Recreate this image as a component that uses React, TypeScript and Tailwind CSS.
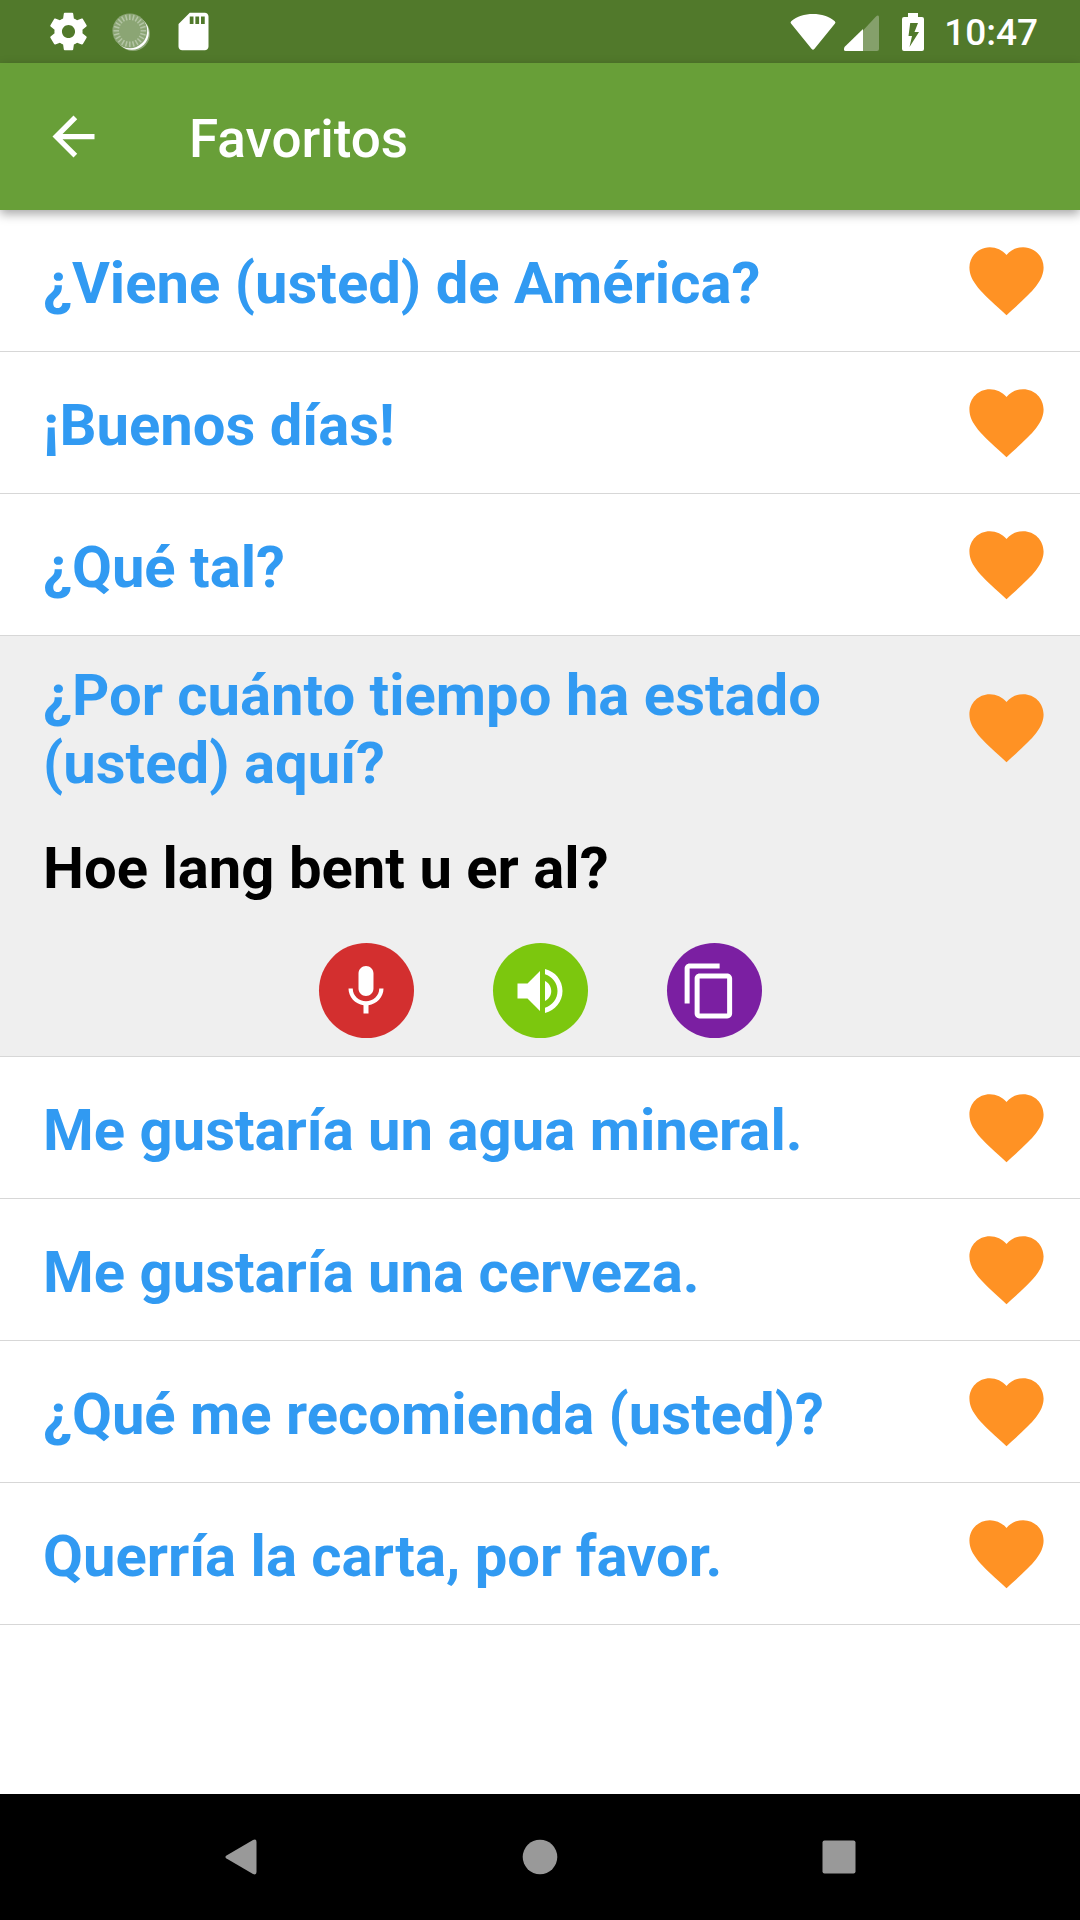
import { useState } from "react";
import type { ReactNode } from "react";
import clsx from "clsx";

type Phrase = { text: string; translation: string };

const phrases: Phrase[] = [
  { text: "¿Viene (usted) de América?", translation: "Komt u uit Amerika?" },
  { text: "¡Buenos días!", translation: "Dag!" },
  { text: "¿Qué tal?", translation: "Hoe gaat het?" },
  {
    text: "¿Por cuánto tiempo ha estado (usted) aquí?",
    translation: "Hoe lang bent u er al?",
  },
  { text: "Me gustaría un agua mineral.", translation: "Ik wil graag een mineraalwater." },
  { text: "Me gustaría una cerveza.", translation: "Ik wil graag een biertje." },
  { text: "¿Qué me recomienda (usted)?", translation: "Wat kunt u mij aanbevelen?" },
  { text: "Querría la carta, por favor.", translation: "De menukaart, alstublieft." },
];

const icons = {
  settings:
    "M19.43 12.98c.04-.32.07-.64.07-.98s-.03-.66-.07-.98l2.11-1.65c.19-.15.24-.42.12-.64l-2-3.46c-.12-.22-.39-.3-.61-.22l-2.49 1c-.52-.4-1.08-.73-1.69-.98l-.38-2.65C14.46 2.18 14.25 2 14 2h-4c-.25 0-.46.18-.49.42l-.38 2.65c-.61.25-1.17.59-1.69.98l-2.49-1c-.23-.09-.49 0-.61.22l-2 3.46c-.13.22-.07.49.12.64l2.11 1.65c-.04.32-.07.65-.07.98s.03.66.07.98l-2.11 1.65c-.19.15-.24.42-.12.64l2 3.46c.12.22.39.3.61.22l2.49-1c.52.4 1.08.73 1.69.98l.38 2.65c.03.24.24.42.49.42h4c.25 0 .46-.18.49-.42l.38-2.65c.61-.25 1.17-.59 1.69-.98l2.49 1c.23.09.49 0 .61-.22l2-3.46c.12-.22.07-.49-.12-.64l-2.11-1.65zM12 15.5c-1.93 0-3.5-1.57-3.5-3.5s1.57-3.5 3.5-3.5 3.5 1.57 3.5 3.5-1.57 3.5-3.5 3.5z",
  sdCard:
    "M18 2h-8L4.02 8 4 20c0 1.1.9 2 2 2h12c1.1 0 2-.9 2-2V4c0-1.1-.9-2-2-2zm-6 6h-2V4h2v4zm3 0h-2V4h2v4zm3 0h-2V4h2v4z",
  back: "M20 11H7.83l5.59-5.59L12 4l-8 8 8 8 1.41-1.41L7.83 13H20v-2z",
  heart:
    "M12 21.35l-1.45-1.32C5.4 15.36 2 12.28 2 8.5 2 5.42 4.42 3 7.5 3c1.74 0 3.41.81 4.5 2.09C13.09 3.81 14.76 3 16.5 3 19.58 3 22 5.42 22 8.5c0 3.78-3.4 6.86-8.55 11.54L12 21.35z",
  mic: "M12 14c1.66 0 2.99-1.34 2.99-3L15 5c0-1.66-1.34-3-3-3S9 3.34 9 5v6c0 1.66 1.34 3 3 3zm5.3-3c0 3-2.54 5.1-5.3 5.1S6.7 14 6.7 11H5c0 3.41 2.72 6.23 6 6.72V21h2v-3.28c3.28-.48 6-3.3 6-6.72h-1.7z",
  volume:
    "M3 9v6h4l5 5V4L7 9H3zm13.5 3c0-1.77-1.02-3.29-2.5-4.03v8.05c1.48-.73 2.5-2.25 2.5-4.02zM14 3.23v2.06c2.89.86 5 3.54 5 6.71s-2.11 5.85-5 6.71v2.06c4.01-.91 7-4.49 7-8.77s-2.99-7.86-7-8.77z",
  copy: "M16 1H4c-1.1 0-2 .9-2 2v14h2V3h12V1zm3 4H8c-1.1 0-2 .9-2 2v14c0 1.1.9 2 2 2h11c1.1 0 2-.9 2-2V7c0-1.1-.9-2-2-2zm0 16H8V7h11v14z",
};

function Icon({
  d,
  className,
  viewBox = "0 0 24 24",
}: {
  d: string;
  className: string;
  viewBox?: string;
}) {
  return (
    <svg viewBox={viewBox} className={className} fill="currentColor" aria-hidden="true">
      <path d={d} />
    </svg>
  );
}

function SyncBall() {
  const ticks = Array.from({ length: 24 }, (_, i) => i * 15);
  return (
    <svg viewBox="0 0 38 38" className="size-[38px]" aria-hidden="true">
      <circle cx="21" cy="21" r="17" fill="#8ba574" />
      <circle cx="19.8" cy="19.8" r="17" fill="#fff" />
      <circle cx="17.8" cy="17.8" r="17.4" fill="#8ba574" />
      {ticks.map((angle) => (
        <path
          key={angle}
          d="M17.8 1.5v5.5"
          stroke="#b4c5a5"
          strokeWidth="1.5"
          transform={`rotate(${angle} 17.8 17.8)`}
        />
      ))}
    </svg>
  );
}

function StatusBar() {
  return (
    <div className="flex h-[63px] items-center justify-between bg-[#51792b] pr-[42px] pl-[46px] text-white">
      <div className="flex items-center gap-[21px]">
        <Icon d={icons.settings} className="size-[45px]" />
        <SyncBall />
        <Icon d={icons.sdCard} className="size-[45px]" />
      </div>
      <div className="flex items-center">
        <svg viewBox="0 0 46 38" className="mr-[7px] h-[38px] w-[46px]" aria-hidden="true">
          <path
            d="M1.2 8.2C7 3.5 14.5 1 23 1s16 2.5 21.8 7.2q1.2 1.1.2 2.4L24.3 36q-1.3 1.500-2.6 0L1 10.6q-1-1.300.2-2.400z"
            fill="#fff"
          />
        </svg>
        <svg viewBox="0 0 36 38" className="mr-[23px] h-[38px] w-[36px]" aria-hidden="true">
          <path d="M20 17.5 32.5 4Q36 1 36 4.500V36q0 2-2 2H20z" fill="#85a06b" />
          <path d="M20 16v22H2.500Q0 38 1.500 34z" fill="#fff" />
        </svg>
        <svg viewBox="0 0 22 38" className="mr-[20px] h-[38px] w-[22px]" aria-hidden="true">
          <path
            fillRule="evenodd"
            d="M6 0h10v4h4q2 0 2 2v30q0 2-2 2H2q-2 0-2-2V6q0-2 2-2h4zM8.200 10 6.500 23H10L7.500 34 17 19h-4.500l3.500-9z"
            fill="#fff"
          />
        </svg>
        <time className="pt-[2px] text-[37px] leading-[44px] font-medium">10:47</time>
      </div>
    </div>
  );
}

function AppBar() {
  return (
    <header className="relative flex h-[147px] items-center bg-[#689f38] pl-[42px] text-white shadow-[0_4px_10px_rgba(0,0,0,0.35)]">
      <button type="button" aria-label="Atrás">
        <Icon d={icons.back} className="size-[63px]" />
      </button>
      <h1 className="ml-[84px] pt-[4px] text-[53px] leading-[62px] font-medium">Favoritos</h1>
    </header>
  );
}

function RoundButton({
  label,
  className,
  onClick,
  children,
}: {
  label: string;
  className: string;
  onClick?: () => void;
  children: ReactNode;
}) {
  return (
    <button
      type="button"
      aria-label={label}
      onClick={onClick}
      className={clsx(
        "flex size-[95px] items-center justify-center rounded-full text-white",
        className,
      )}
    >
      {children}
    </button>
  );
}

function PhraseRow({
  phrase,
  open,
  onToggle,
}: {
  phrase: Phrase;
  open: boolean;
  onToggle: () => void;
}) {
  const [favorite, setFavorite] = useState(true);

  const copy = async () => {
    try {
      await navigator.clipboard.writeText(phrase.translation);
    } catch {
      alert("No se pudo copiar.");
    }
  };

  return (
    <li className={clsx("border-b border-[#d7d7d7]", open && "bg-[#efefef]")}>
      <div className="flex min-h-[141px] items-center py-[21px] pr-[29px] pl-[43px]">
        <button
          type="button"
          aria-expanded={open}
          onClick={onToggle}
          className="flex-1 pt-[4px] pr-[80px] text-left text-[58px] leading-[68px] font-bold text-[#319af2]"
        >
          {phrase.text}
        </button>
        <button
          type="button"
          aria-label="Favorito"
          aria-pressed={favorite}
          onClick={() => setFavorite(!favorite)}
          className={favorite ? "text-[#ff9224]" : "text-zinc-300"}
        >
          <Icon d={icons.heart} className="size-[89px]" />
        </button>
      </div>
      {open && (
        <div className="pb-[18px]">
          <p className="px-[43px] pt-[16px] text-[58px] leading-[68px] font-bold text-black">
            {phrase.translation}
          </p>
          <div className="mt-[41px] flex justify-center gap-[79px]">
            <RoundButton label="Grabar" className="bg-[#d32f2f]">
              <Icon d={icons.mic} className="size-[60px]" />
            </RoundButton>
            <RoundButton label="Escuchar" className="bg-[#7cc70e]">
              <Icon d={icons.volume} className="size-[60px]" />
            </RoundButton>
            <RoundButton label="Copiar" className="bg-[#7b1fa2]" onClick={() => void copy()}>
              <Icon d={icons.copy} viewBox="1.75 0 24 24" className="size-[60px]" />
            </RoundButton>
          </div>
        </div>
      )}
    </li>
  );
}

function NavBar() {
  return (
    <nav className="flex h-[126px] items-center justify-center gap-[263px] bg-black text-[#999]">
      <button type="button" aria-label="Atrás">
        <svg viewBox="0 0 36 36" className="size-[36px]" fill="currentColor" aria-hidden="true">
          <path d="M30 1Q33.500-.5 33.500 3v30q0 3.500-3.500 2L3.500 19.500q-2.200-1.500 0-3z" />
        </svg>
      </button>
      <button type="button" aria-label="Inicio">
        <svg viewBox="0 0 36 36" className="size-[36px]" fill="currentColor" aria-hidden="true">
          <circle cx="18" cy="18" r="17.3" />
        </svg>
      </button>
      <button type="button" aria-label="Recientes">
        <svg viewBox="0 0 36 36" className="size-[36px]" fill="currentColor" aria-hidden="true">
          <rect x="1.5" y="1.5" width="33" height="33" rx="2" />
        </svg>
      </button>
    </nav>
  );
}

export default function App() {
  const [openIndex, setOpenIndex] = useState<number | null>(3);

  return (
    <div className="flex min-h-screen flex-col bg-white font-[Roboto,sans-serif]">
      <StatusBar />
      <AppBar />
      <main className="flex-1">
        <ul>
          {phrases.map((phrase, i) => (
            <PhraseRow
              key={phrase.text}
              phrase={phrase}
              open={openIndex === i}
              onToggle={() => setOpenIndex(openIndex === i ? null : i)}
            />
          ))}
        </ul>
      </main>
      <NavBar />
    </div>
  );
}
